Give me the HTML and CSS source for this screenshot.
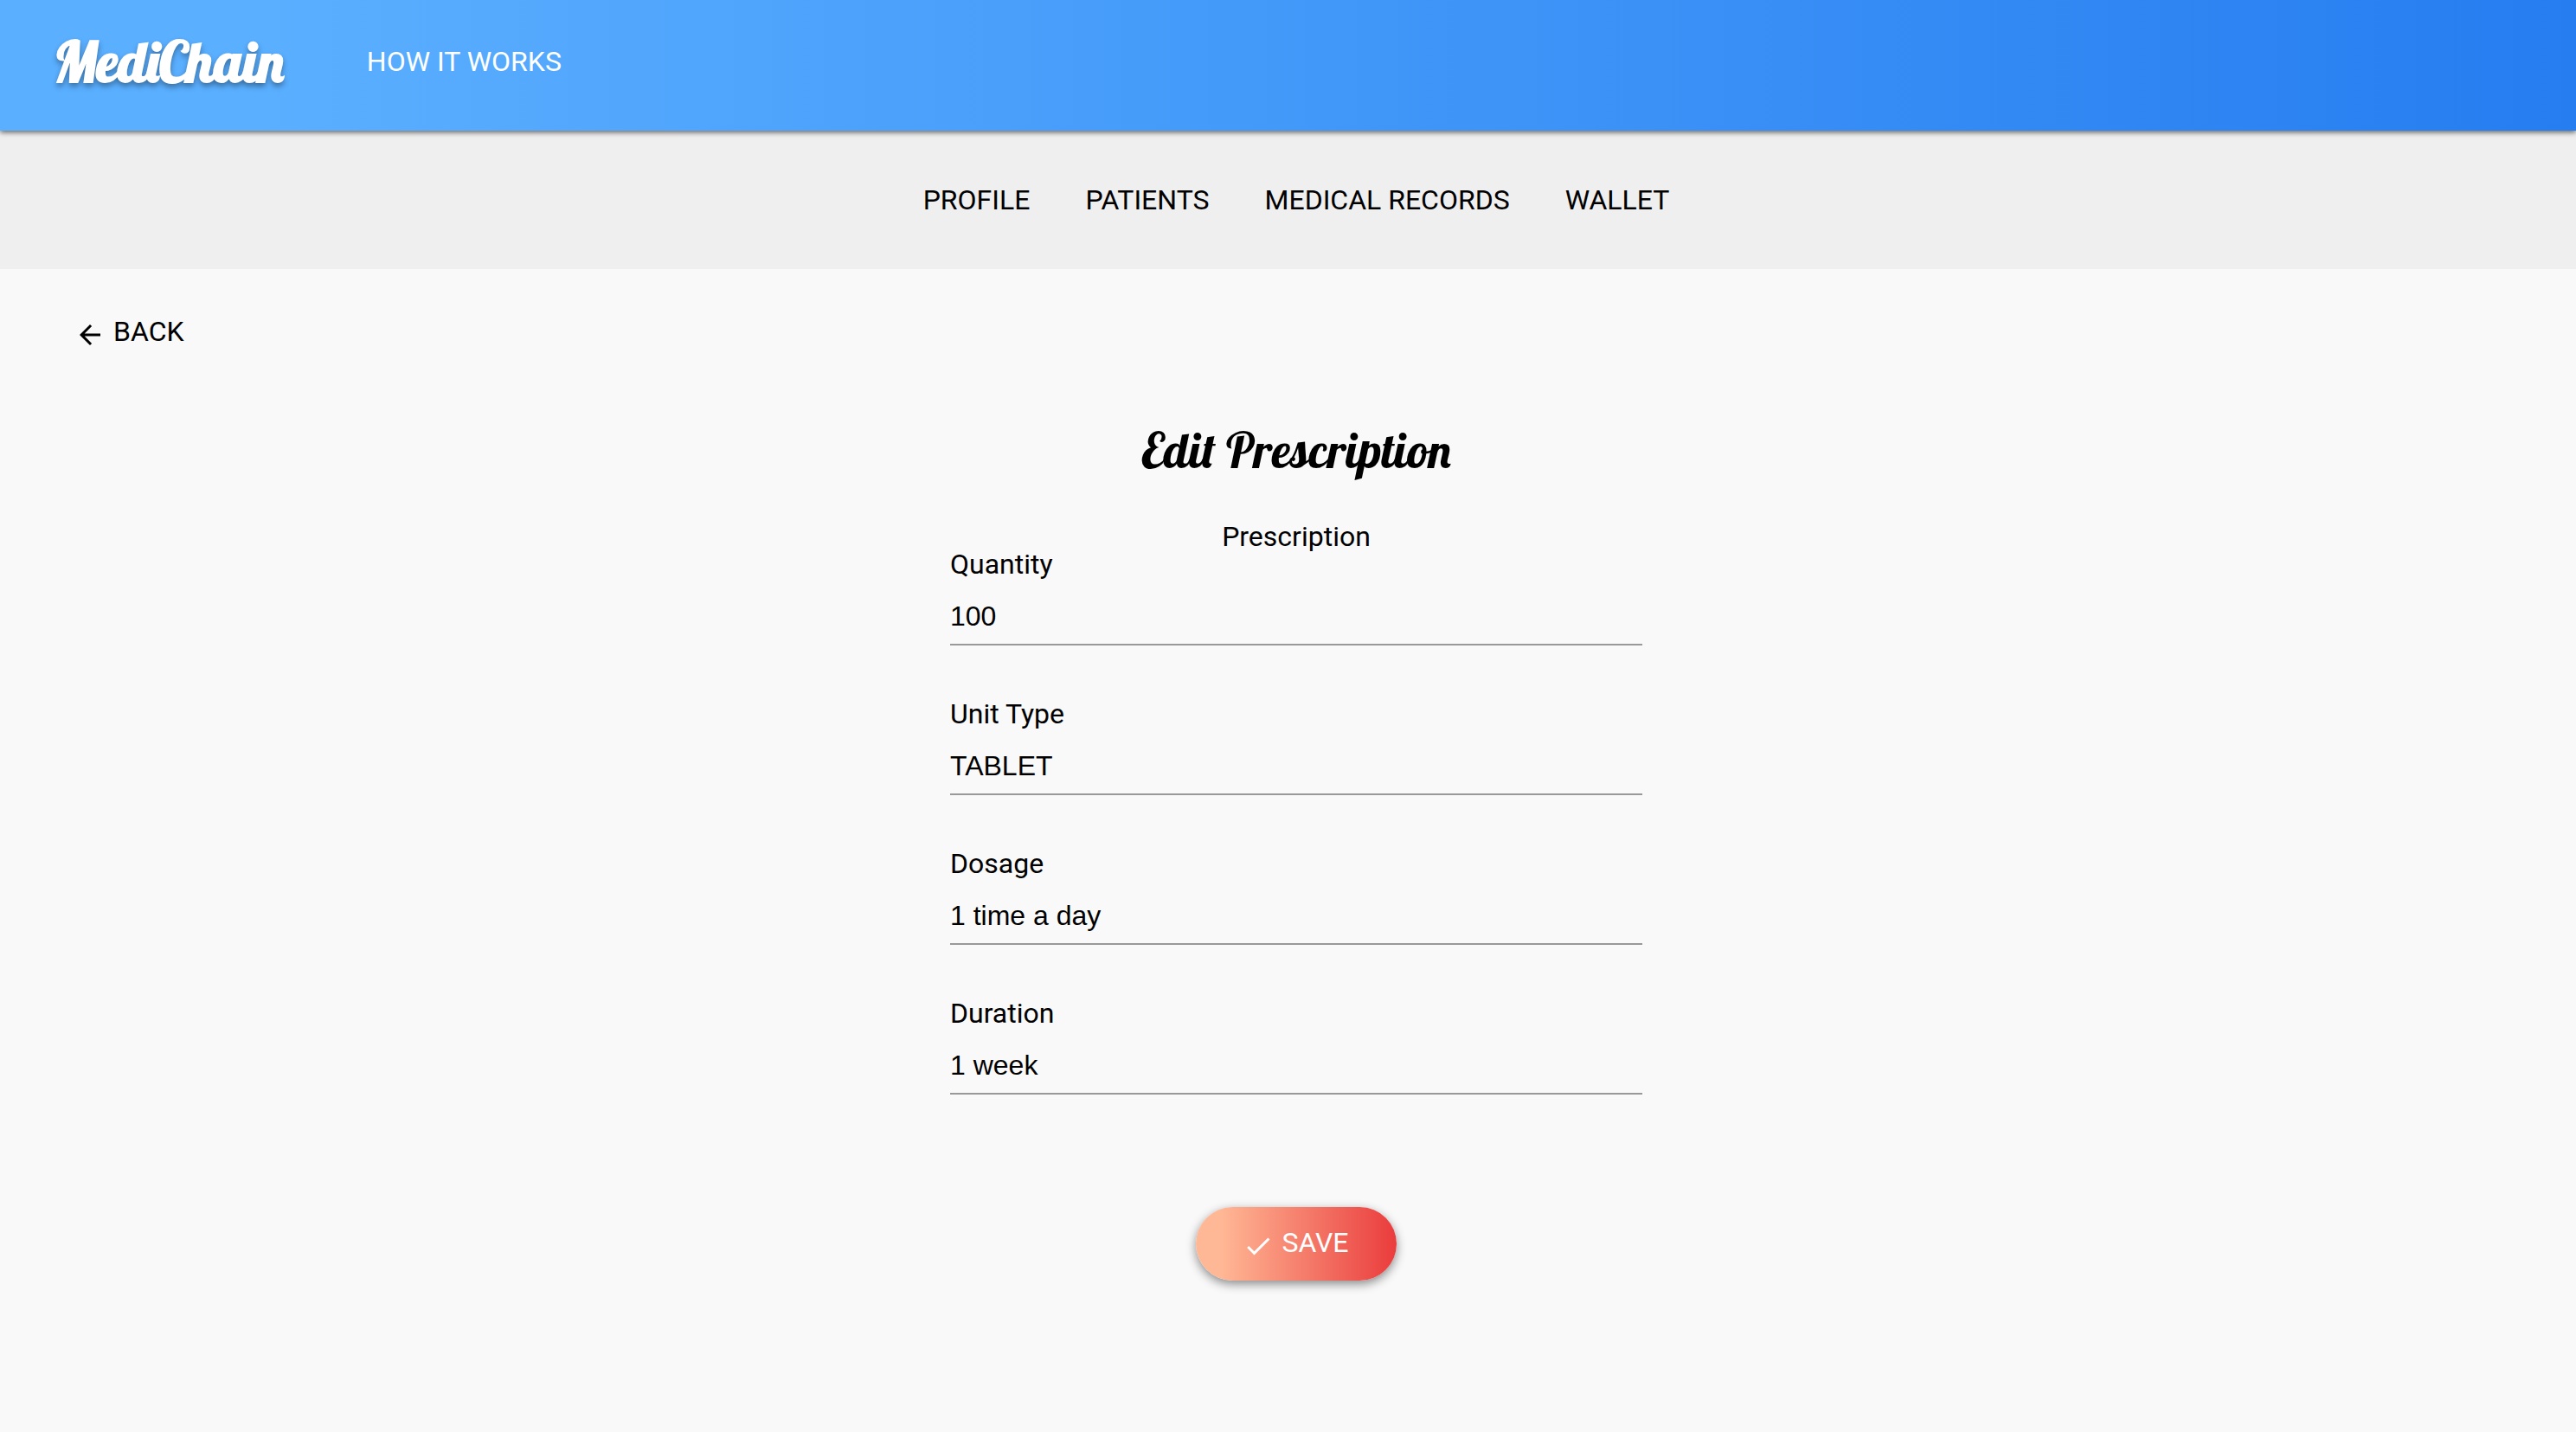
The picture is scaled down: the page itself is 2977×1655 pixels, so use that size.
FILE: index.html
```html
<!DOCTYPE html>
<html lang="en">
<head>
<meta charset="utf-8">
<title>MediChain</title>
<link rel="stylesheet" href="styles.css">
</head>
<body>
<header class="topbar">
  <a class="brand" href="#">MediChain</a>
  <a class="topbar-link" href="#">HOW IT WORKS</a>
</header>
<nav class="subnav">
  <a href="#">PROFILE</a>
  <a href="#">PATIENTS</a>
  <a href="#">MEDICAL RECORDS</a>
  <a href="#">WALLET</a>
</nav>
<main class="content">
  <a class="back" href="#">
    <svg class="icon" viewBox="0 0 24 24" aria-hidden="true"><path d="M20 11H7.83l5.59-5.59L12 4l-8 8 8 8 1.41-1.41L7.83 13H20v-2z"/></svg>
    BACK
  </a>
  <form class="form">
    <h1 class="title">Edit Prescription</h1>
    <p class="section">Prescription</p>
    <div class="field">
      <label for="quantity">Quantity</label>
      <input id="quantity" type="text" value="100">
    </div>
    <div class="field">
      <label for="unit">Unit Type</label>
      <input id="unit" type="text" value="TABLET">
    </div>
    <div class="field">
      <label for="dosage">Dosage</label>
      <input id="dosage" type="text" value="1 time a day">
    </div>
    <div class="field">
      <label for="duration">Duration</label>
      <input id="duration" type="text" value="1 week">
    </div>
    <button class="save" type="button">
      <svg class="icon" viewBox="0 0 24 24" aria-hidden="true"><path d="M9 16.17L4.83 12l-1.42 1.41L9 19 21 7l-1.41-1.41z"/></svg>
      SAVE
    </button>
  </form>
</main>
</body>
</html>
```
FILE: styles.css
```css
* {
  box-sizing: border-box;
}

body {
  margin: 0;
  min-height: 100vh;
  background: #f9f9f9;
  color: #000;
  font: 32px/32px Roboto, sans-serif;
}

a {
  color: inherit;
  text-decoration: none;
}

.topbar {
  position: relative;
  display: flex;
  align-items: center;
  gap: 96px;
  padding: 31px 62px 40px;
  background: linear-gradient(to right, #5aafff 10%, #267df0);
  box-shadow: 0 2px 6px rgba(0, 0, 0, 0.6);
  color: #fff;
}

.brand,
.title {
  font-family: Lobster, "Liberation Serif", serif;
  font-weight: 400;
}

.brand {
  font-size: 64px;
  font-weight: 700;
  line-height: 80px;
  text-shadow: 0 4px 6px rgba(0, 0, 0, 0.35);
}

.subnav {
  display: flex;
  justify-content: center;
  gap: 64px;
  padding: 64px 0 64px 19px;
  background: #efefef;
}

.content {
  padding: 50px 0 96px 19px;
}

.back {
  display: flex;
  align-items: center;
  gap: 9px;
  width: fit-content;
  margin-left: 67px;
}

.icon {
  width: 36px;
  height: 36px;
  margin-top: 8px;
  fill: currentColor;
}

.form {
  display: flex;
  flex-direction: column;
  align-items: center;
  width: 800px;
  max-width: 100%;
  margin: 0 auto;
}

.title {
  margin: 80px 0 49px;
  font-size: 56px;
  line-height: 70px;
}

.section {
  margin: 0;
}

.field {
  display: flex;
  flex-direction: column;
  width: 100%;
  margin-bottom: 63px;
}

.field input {
  width: 100%;
  height: 78px;
  padding: 28px 0 16px;
  border: 0;
  border-bottom: 2px solid #999;
  border-radius: 0;
  background: none;
  color: inherit;
  font: 32px/32px "Liberation Sans", Arial, sans-serif;
  outline: 0;
}

.save {
  display: flex;
  align-items: center;
  gap: 9px;
  height: 85px;
  margin-top: 67px;
  padding: 0 55px 3px 54px;
  border: 0;
  border-radius: 43px;
  background: linear-gradient(to right, #ffb895 12%, #ea3c3c);
  box-shadow: 0 4px 12px rgba(0, 0, 0, 0.45);
  color: #fff;
  font: inherit;
}
```
